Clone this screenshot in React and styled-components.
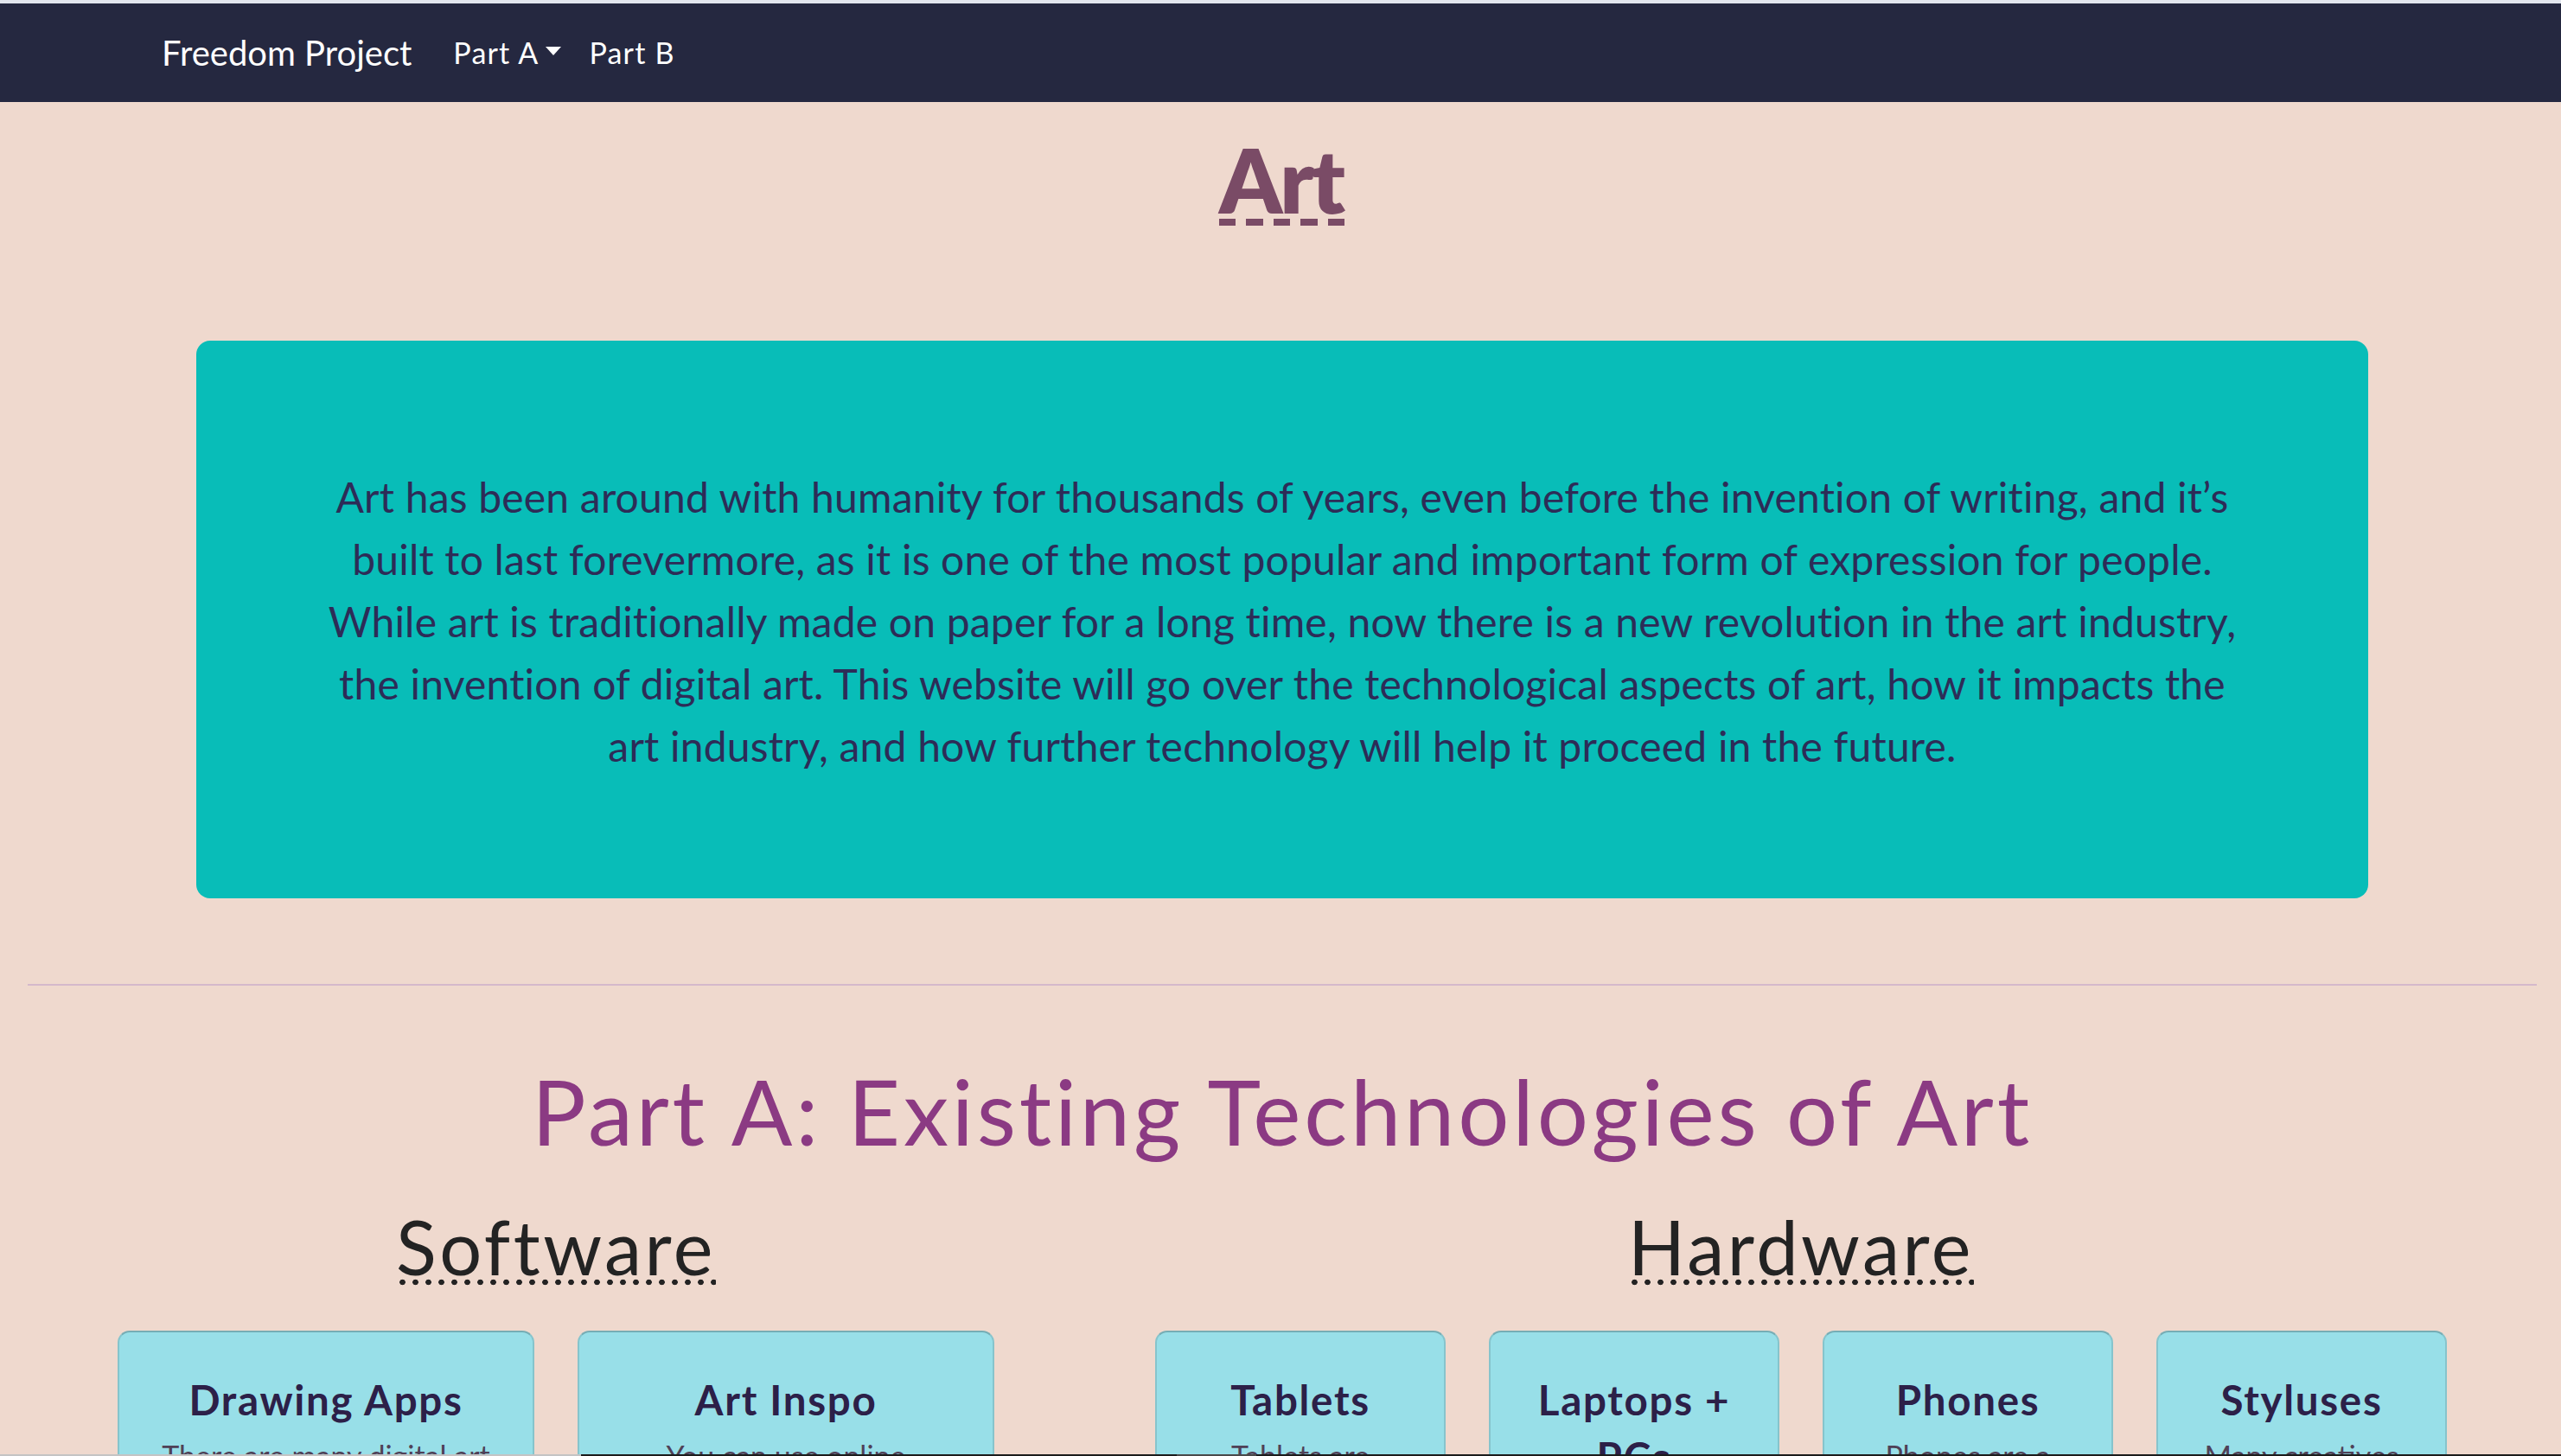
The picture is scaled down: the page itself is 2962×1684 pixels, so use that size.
import React from "react";
import styled, { createGlobalStyle } from "styled-components";

const GlobalStyle = createGlobalStyle`
  html, body {
    margin: 0;
    padding: 0;
    overflow: hidden;
    background: #efd9ce;
  }
  body {
    font-family: Lato, "Noto Sans", sans-serif;
  }
  * { box-sizing: border-box; }
`;

const Page = styled.div`
  width: 2966px;
  min-height: 1684px;
  background: #efd9ce;
`;

const Navbar = styled.nav`
  height: 118px;
  background: #252840;
  border-top: 4px solid #e2e6ee;
  display: flex;
  align-items: center;
`;

const NavContainer = styled.div`
  width: 2640px;
  margin: 0 auto;
  padding: 0 24px;
  display: flex;
  align-items: center;
`;

const Brand = styled.a`
  font-size: 40px;
  color: #ffffff;
  margin-right: 32px;
  line-height: 60px;
  text-decoration: none;
`;

const NavLink = styled.a`
  font-size: 34px;
  letter-spacing: 1.2px;
  color: #ffffff;
  padding: 0 16px;
  line-height: 48px;
  text-decoration: none;
  display: inline-flex;
  align-items: center;
`;

const Caret = styled.span`
  display: inline-block;
  margin-left: 8px;
  border-top: 10px solid #ffffff;
  border-left: 9px solid transparent;
  border-right: 9px solid transparent;
  transform: translateY(-2px);
`;

const TitleWrap = styled.header`
  text-align: center;
  margin-top: 28px;
`;

const Title = styled.h1`
  margin: 0;
  font-size: 103px;
  line-height: 1.2;
  font-weight: 800;
  letter-spacing: -3px;
  color: #7a4b66;
`;

const DashedText = styled.span`
  display: inline-block;
  padding-right: 3px;
  background-image: repeating-linear-gradient(
    90deg,
    #7a4b66 0 19.5px,
    transparent 19.5px 31.5px
  );
  background-repeat: no-repeat;
  background-size: 100% 8px;
  background-position: 0 calc(100% - 9px);
`;

const IntroBox = styled.section`
  width: 2512px;
  margin: 124px auto 0;
  padding: 145px 60px 140px;
  background: #08bdb8;
  border-radius: 16px;
`;

const IntroText = styled.p`
  margin: 0;
  text-align: center;
  font-size: 48px;
  letter-spacing: 0.2px;
  line-height: 72px;
  color: #2d2c57;
  white-space: nowrap;
`;

const Rule = styled.hr`
  margin: 99px 32px 0;
  border: 0;
  height: 2px;
  background: #d4b9cb;
`;

const PartTitle = styled.h2`
  margin: 82px 0 0;
  text-align: center;
  font-size: 104.5px;
  letter-spacing: 3.8px;
  line-height: 1.2;
  font-weight: 400;
  color: #8b3a83;
`;

const Columns = styled.div`
  display: grid;
  grid-template-columns: 1014px 1494px;
  column-gap: 186px;
  justify-content: center;
  margin-top: 43px;
`;

const Column = styled.div`
  display: flex;
  flex-direction: column;
  align-items: center;
`;

const ColumnTitle = styled.h3`
  margin: 0;
  font-size: 86.5px;
  letter-spacing: 3.5px;
  line-height: 1.2;
  font-weight: 400;
  color: #232323;
`;

const DottedText = styled.span`
  display: inline-block;
  background-image: radial-gradient(circle, #232323 3px, transparent 3.6px);
  background-repeat: repeat-x;
  background-size: 15px 8px;
  background-position: 0 calc(100% - 7px);
`;

const CardRow = styled.div`
  display: grid;
  grid-template-columns: repeat(${(p) => p.$count}, 1fr);
  column-gap: 50px;
  width: 100%;
  margin-top: 45px;
`;

const Card = styled.article`
  background: #98dfe8;
  border: 2px solid #86c4cc;
  border-top-color: #76adb5;
  border-radius: 14px;
  padding: 45px 30px 48px;
  text-align: center;
`;

const CardTitle = styled.h4`
  margin: 0 0 8px;
  font-size: 47.5px;
  letter-spacing: 1.7px;
  line-height: 66px;
  font-weight: 700;
  color: #2c2048;
`;

const CardText = styled.p`
  margin: 0;
  font-size: 34px;
  line-height: 48px;
  color: #4f4157;
`;

const BottomEdge = styled.div`
  position: fixed;
  left: 0;
  right: 0;
  bottom: 0;
  height: 2px;
  background: linear-gradient(
    90deg,
    #c4c4c4 0 672px,
    #1c1c1c 672px 1361px,
    #4a4a4a 1361px 1453px,
    #1c1c1c 1453px
  );
`;

const softwareCards = [
  {
    title: "Drawing Apps",
    text: "There are many digital art apps that artists use to create their work, such as Procreate, Photoshop and Clip Studio Paint.",
  },
  {
    title: "Art Inspo",
    text: "You can use online resources to find art inspiration, such as Pinterest, Instagram and ArtStation.",
  },
];

const hardwareCards = [
  { title: "Tablets", text: "Tablets are essential tools for digital artists to draw on." },
  { title: "Laptops + PCs", text: "Computers let artists run powerful drawing programs." },
  { title: "Phones", text: "Phones are a convenient way to draw anywhere." },
  { title: "Styluses", text: "Many creatives use styluses to draw precisely." },
];

export default function App() {
  return (
    <Page>
      <GlobalStyle />
      <Navbar>
        <NavContainer>
          <Brand href="#">Freedom Project</Brand>
          <NavLink href="#">
            Part A<Caret />
          </NavLink>
          <NavLink href="#">Part B</NavLink>
        </NavContainer>
      </Navbar>

      <TitleWrap>
        <Title>
          <DashedText>Art</DashedText>
        </Title>
      </TitleWrap>

      <IntroBox>
        <IntroText>
          Art has been around with humanity for thousands of years, even before the invention of writing, and it’s
          <br />
          built to last forevermore, as it is one of the most popular and important form of expression for people.
          <br />
          While art is traditionally made on paper for a long time, now there is a new revolution in the art industry,
          <br />
          the invention of digital art. This website will go over the technological aspects of art, how it impacts the
          <br />
          art industry, and how further technology will help it proceed in the future.
        </IntroText>
      </IntroBox>

      <Rule />

      <PartTitle>Part A: Existing Technologies of Art</PartTitle>

      <Columns>
        <Column>
          <ColumnTitle>
            <DottedText>Software</DottedText>
          </ColumnTitle>
          <CardRow $count={2}>
            {softwareCards.map((c) => (
              <Card key={c.title}>
                <CardTitle>{c.title}</CardTitle>
                <CardText>{c.text}</CardText>
              </Card>
            ))}
          </CardRow>
        </Column>
        <Column>
          <ColumnTitle>
            <DottedText>Hardware</DottedText>
          </ColumnTitle>
          <CardRow $count={4}>
            {hardwareCards.map((c) => (
              <Card key={c.title}>
                <CardTitle>{c.title}</CardTitle>
                <CardText>{c.text}</CardText>
              </Card>
            ))}
          </CardRow>
        </Column>
      </Columns>
      <BottomEdge />
    </Page>
  );
}
